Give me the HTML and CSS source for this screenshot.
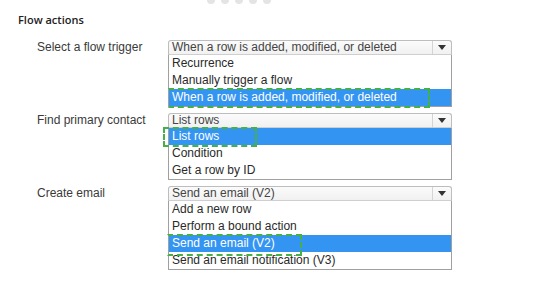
FILE: index.html
```html
<!DOCTYPE html>
<html>
<head>
<title>Flow actions</title>
<link rel="stylesheet" href="styles.css">
</head>
<body>

<div class="dots">
	<span></span><span></span><span></span><span></span><span></span>
</div>

<div class="main-view">
	<div class="title">Flow actions</div>

	<div class="field">
		<div class="label">Select a flow trigger</div>
		<div class="picker">
			<div class="select">
				<div class="value">When a row is added, modified, or deleted</div>
				<div class="arrow"></div>
			</div>
			<div class="list">
				<div class="option">Recurrence</div>
				<div class="option">Manually trigger a flow</div>
				<div class="option picked">When a row is added, modified, or deleted</div>
			</div>
			<div class="mark mark-1"></div>
		</div>
	</div>

	<div class="field">
		<div class="label">Find primary contact</div>
		<div class="picker">
			<div class="select">
				<div class="value">List rows</div>
				<div class="arrow"></div>
			</div>
			<div class="list">
				<div class="option picked">List rows</div>
				<div class="option">Condition</div>
				<div class="option">Get a row by ID</div>
			</div>
			<div class="mark mark-2"></div>
		</div>
	</div>

	<div class="field">
		<div class="label">Create email</div>
		<div class="picker">
			<div class="select">
				<div class="value">Send an email (V2)</div>
				<div class="arrow"></div>
			</div>
			<div class="list">
				<div class="option">Add a new row</div>
				<div class="option">Perform a bound action</div>
				<div class="option picked">Send an email (V2)</div>
				<div class="option">Send an email notification (V3)</div>
			</div>
			<div class="mark mark-3"></div>
		</div>
	</div>
</div>

</body>
</html>
```

FILE: styles.css
```css
body {
	margin: 0;
	background: #fff;
	color: #333;
	font-family: "Liberation Sans", Arial, sans-serif;
	font-size: 12px;
}
.dots {
	height: 4px;
	overflow: hidden;
	display: flex;
	gap: 6px;
	padding-left: 207px;
}
.dots span {
	width: 8px;
	height: 8px;
	margin-top: -4px;
	border-radius: 50%;
	background: #e4e4e4;
}
.main-view {
	padding: 8px 0 0 18px;
}
.title {
	font-family: "Open Sans", sans-serif;
	font-weight: 600;
	font-size: 11px;
	color: #222;
	height: 28px;
}
.field {
	display: flex;
	padding-left: 19px;
	margin-bottom: 6px;
}
.label {
	width: 131px;
	line-height: 15px;
	color: #3a3a3a;
}
.picker {
	position: relative;
	width: 284px;
}
.select {
	display: flex;
	height: 15px;
	border: 1px solid #bdbdbd;
	border-bottom-color: #cfcfcf;
	border-radius: 3px 3px 0 0;
	background: linear-gradient(#fbfbfb, #f1f1f1);
	box-sizing: border-box;
}
.value {
	flex: 1;
	padding-left: 3px;
	line-height: 13px;
	color: #444;
	white-space: nowrap;
	overflow: hidden;
}
.arrow {
	width: 18px;
	border-left: 1px solid #d4d4d4;
	display: flex;
	align-items: center;
	justify-content: center;
}
.arrow::after {
	content: "";
	border-left: 4px solid transparent;
	border-right: 4px solid transparent;
	border-top: 5px solid #333;
}
.list {
	border: 1px solid #a0a0a0;
	border-top: none;
	background: #fff;
}
.option {
	height: 17px;
	line-height: 17px;
	padding-left: 3px;
	color: #2a2a2a;
	white-space: nowrap;
}
.option.picked {
	background: #3394f2;
	color: #fff;
}
.mark {
	position: absolute;
	border: 2px dashed #45b045;
	border-left-color: transparent;
}
.mark-1 { left: 0; top: 48px; width: 258px; height: 16px; }
.mark-2 { left: -5px; top: 14px; width: 90px; height: 16px; border-left-color: #45b045; }
.mark-3 { left: -1px; top: 48px; width: 131px; height: 18px; }
```
